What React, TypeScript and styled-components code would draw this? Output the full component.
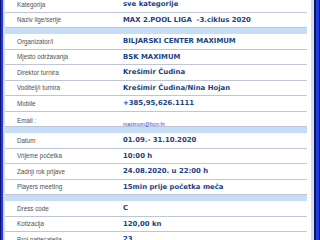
import styled, { createGlobalStyle } from "styled-components";

const GlobalStyle = createGlobalStyle`
  html, body {
    margin: 0;
    padding: 0;
    overflow: hidden;
    background: #ffffff;
  }
`;

export const Window = styled.div`
  display: flex;
  height: 240px;
  width: 320px;
  box-sizing: border-box;
  padding: 0 1px;
  background: #0b1378;
  overflow: hidden;
`;

export const Bezel = styled.div`
  display: flex;
  flex: 1;
  border-left: 2px solid #1d3fd8;
  border-right: 3px solid #1d3fd8;
  background: #0b1378;
`;

export const Sheet = styled.div`
  flex: 1;
  margin-right: 2px;
  background: #ffffff;
  border-left: 2px solid #dcdcdc;
  border-right: 3px solid #dcdcdc;
  padding-right: 4px;
  overflow: hidden;
`;

export const Table = styled.div`
  display: flex;
  flex-direction: column;
  margin-top: -3px;
`;

export const Row = styled.div`
  display: grid;
  grid-template-columns: 118px 1fr;
  align-items: center;
  height: 14.5px;
  border-bottom: 1px solid #bcc6d8;
`;

export const Label = styled.div`
  padding-left: 12px;
  font-family: "Liberation Sans", Arial, sans-serif;
  font-size: 6.3px;
  color: #505050;
  white-space: nowrap;
`;

export const Value = styled.div`
  font-family: "DejaVu Sans", Verdana, sans-serif;
  font-size: 6.9px;
  font-weight: 700;
  color: #223f85;
  white-space: pre;
`;

export const MailLink = styled.a`
  font-family: "Liberation Sans", Arial, sans-serif;
  font-size: 5px;
  color: #2a3fe0;
  text-decoration: underline;
`;

export const Band = styled.div`
  height: 6px;
  background: #c6ddf7;
`;

type Item = { label: string; value: string; mail?: boolean };

const groups: Item[][] = [
  [
    { label: "Kategorija", value: "sve kategorije" },
    { label: "Naziv lige/serije", value: "MAX 2.POOL LIGA  -3.ciklus 2020" },
  ],
  [
    { label: "Organizator/i", value: "BILJARSKI CENTER MAXIMUM" },
    { label: "Mjesto održavanja", value: "BSK MAXIMUM" },
    { label: "Direktor turnira", value: "Krešimir Čudina" },
    { label: "Voditelj/i turnira", value: "Krešimir Čudina/Nina Hojan" },
    { label: "Mobile", value: "+385,95,626.1111" },
    { label: "Email :", value: "maximum@bcm.hr", mail: true },
  ],
  [
    { label: "Datum", value: "01.09.- 31.10.2020" },
    { label: "Vrijeme početka", value: "10:00 h" },
    { label: "Zadnji rok prijave", value: "24.08.2020. u 22:00 h" },
    { label: "Players meeting", value: "15min prije početka meča" },
  ],
  [
    { label: "Dress code", value: "C" },
    { label: "Kotizacija", value: "120,00 kn" },
    { label: "Broj natjecatelja", value: "23" },
  ],
];

export default function App() {
  return (
    <>
      <GlobalStyle />
      <Window>
        <Bezel>
          <Sheet>
            <Table>
              {groups.map((group, gi) => (
                <div key={gi}>
                  {gi > 0 && <Band />}
                  {group.map((item) => (
                    <Row key={item.label}>
                      <Label>{item.label}</Label>
                      {item.mail ? (
                        <div>
                          <MailLink href={"mailto:" + item.value}>
                            {item.value}
                          </MailLink>
                        </div>
                      ) : (
                        <Value>{item.value}</Value>
                      )}
                    </Row>
                  ))}
                </div>
              ))}
            </Table>
          </Sheet>
        </Bezel>
      </Window>
    </>
  );
}
